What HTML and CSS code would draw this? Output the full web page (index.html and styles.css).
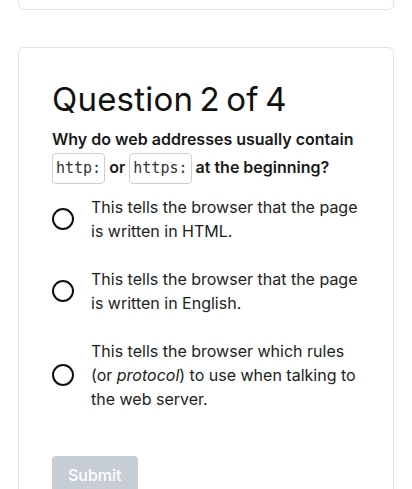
FILE: index.html
```html
<!DOCTYPE html>
<html lang="en">
<head>
  <meta charset="UTF-8">
  <title>Quiz</title>
  <link rel="stylesheet" href="styles.css">
</head>
<body>
  <div class="card prev"></div>

  <div class="card">
    <h2>Question 2 of 4</h2>
    <p class="question">Why do web addresses usually contain <code>http:</code> or <code>https:</code> at the beginning?</p>

    <label class="option">
      <span class="radio"></span>
      <span>This tells the browser that the page is written in HTML.</span>
    </label>
    <label class="option">
      <span class="radio"></span>
      <span>This tells the browser that the page is written in English.</span>
    </label>
    <label class="option">
      <span class="radio"></span>
      <span>This tells the browser which rules (or <em>protocol</em>) to use when talking to the web server.</span>
    </label>

    <button class="submit" disabled>Submit</button>
  </div>
</body>
</html>
```

FILE: styles.css
```css
body {
  font-family: Inter, "Noto Sans", sans-serif;
  color: #1a1a1a;
  margin: 0;
  padding: 0 18px;
}
.card {
  border: 1px solid #e3e3e3;
  border-radius: 6px;
  padding: 31px 33px 40px;
  background: #fff;
}
.prev {
  padding: 0;
  height: 60px;
  margin-top: -52px;
  margin-bottom: 37px;
}
h2 {
  font-weight: 400;
  font-size: 33px;
  line-height: 40px;
  letter-spacing: 0.2px;
  word-spacing: -3px;
  margin: 0;
  color: #111;
}
.question {
  font-weight: 600;
  font-size: 16px;
  line-height: 27px;
  margin: 7px 0 11px;
}
code {
  font-family: "DejaVu Sans Mono", monospace;
  font-weight: 400;
  font-size: 15px;
  color: #333;
  display: inline-block;
  line-height: 29px;
  padding: 0 3px;
  border: 1px solid #cfcfcf;
  border-radius: 4px;
  vertical-align: middle;
}
.option {
  display: flex;
  align-items: center;
  gap: 17px;
  font-size: 16px;
  line-height: 24px;
  margin-bottom: 24px;
  color: #222;
}
.radio {
  flex: none;
  width: 18px;
  height: 18px;
  border: 2.5px solid #111;
  border-radius: 50%;
}
.submit {
  margin-top: 21px;
  font-family: Inter, sans-serif;
  font-size: 16px;
  font-weight: 500;
  color: #fff;
  background: #c6cdd4;
  border: none;
  border-radius: 4px;
  padding: 9px 16px;
}
```
